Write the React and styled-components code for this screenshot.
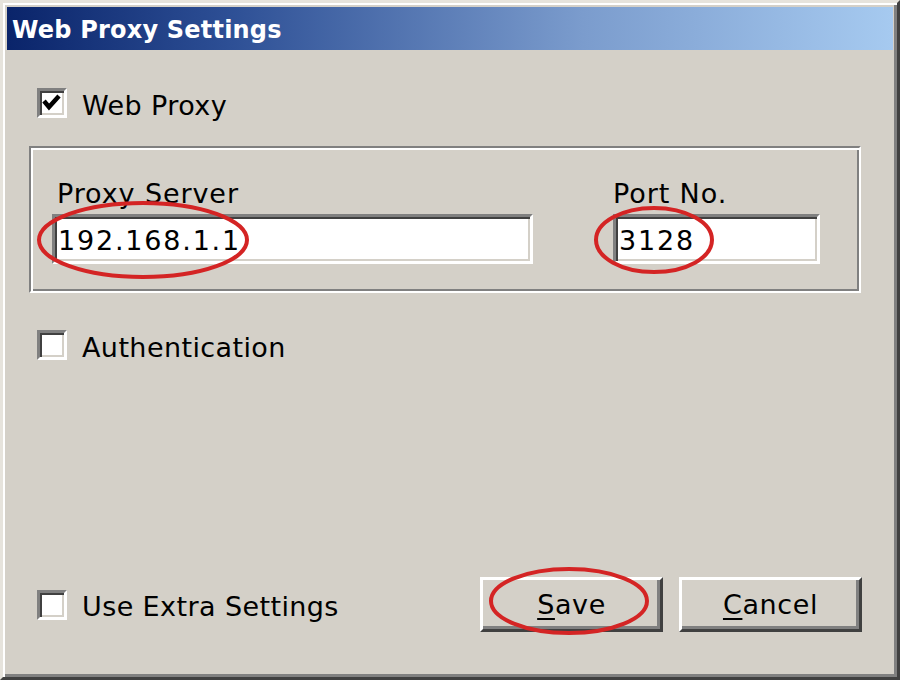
import styled, { createGlobalStyle } from "styled-components";

const GlobalStyle = createGlobalStyle`
	html, body {
		margin: 0;
		padding: 0;
		background: #d4d0c8;
	}
	* {
		box-sizing: border-box;
	}
`;

// 창 전체 틀
const Window = styled.div`
	position: relative;
	width: 900px;
	height: 680px;
	display: flex;
	flex-direction: column;
	padding: 4px;
	background: #d4d0c8;
	border-style: solid;
	border-width: 3px;
	border-color: #e6e3dc #404040 #404040 #e6e3dc;
	box-shadow: inset 2px 2px 0 #ffffff, inset -3px -3px 0 #808080;
	font-family: "DejaVu Sans", Verdana, sans-serif;
	font-size: 27px;
	letter-spacing: 0.4px;
	color: #000;
`;

const TitleBar = styled.div`
	height: 43px;
	display: flex;
	align-items: center;
	padding: 2px 0 0 5px;
	background: linear-gradient(to right, #0a246a 0%, #2d4f95 25%, #7b9ccd 65%, #a6caf0 100%);
	color: #fff;
	font-weight: bold;
	font-size: 24px;
	letter-spacing: 0.2px;
`;

const Content = styled.div`
	flex: 1;
	display: flex;
	flex-direction: column;
	padding: 38px 32px 41px 22px;
`;

const CheckRow = styled.label`
	display: flex;
	align-items: center;
	gap: 15px;
	height: 30px;
	margin-left: 8px;
	margin-top: ${(p) => p.$top || 0}px;
	line-height: 32px;
`;

const RowText = styled.span`
	padding-top: 5px;
`;

const Box = styled.span`
	width: 30px;
	height: 30px;
	flex: none;
	display: flex;
	align-items: center;
	justify-content: center;
	background: #fff;
	border-style: solid;
	border-width: 3px;
	border-color: #808080 #ffffff #ffffff #808080;
	box-shadow: inset 2px 2px 0 #404040, inset -2px -2px 0 #d4d0c8;
`;

// 테두리가 새겨진 그룹 상자
const GroupBox = styled.div`
	margin-top: 28px;
	height: 147px;
	display: grid;
	grid-template-columns: 481px 207px;
	column-gap: 80px;
	padding: 30px 37px 0 21px;
	border-style: solid;
	border-width: 2px;
	border-color: #808080 #ffffff #ffffff #808080;
	box-shadow: inset 2px 2px 0 #ffffff, inset -2px -2px 0 #808080;
`;

const Field = styled.div`
	display: flex;
	flex-direction: column;
	gap: 4px;
`;

const FieldLabel = styled.div`
	line-height: 32px;
	height: 32px;
	margin-left: ${(p) => p.$indent || 0}px;
	letter-spacing: 0.9px;
`;

const TextBox = styled.div`
	height: 50px;
	display: flex;
	align-items: center;
	padding: 3px 0 0 3px;
	background: #fff;
	letter-spacing: 1.8px;
	border-style: solid;
	border-width: 3px;
	border-color: #808080 #ffffff #ffffff #808080;
	box-shadow: inset 2px 2px 0 #404040, inset -2px -2px 0 #d4d0c8;
`;

const BottomRow = styled.div`
	margin-top: auto;
	display: flex;
	align-items: center;
	justify-content: space-between;
`;

const Buttons = styled.div`
	display: flex;
	gap: 16px;
	margin-right: -1px;
`;

const Button = styled.button`
	width: 183px;
	height: 55px;
	padding: 0;
	background: #d4d0c8;
	font-family: inherit;
	font-size: 27px;
	letter-spacing: 0.6px;
	color: #000;
	border-style: solid;
	border-width: 3px;
	border-color: #ffffff #404040 #404040 #ffffff;
	box-shadow: inset -3px -3px 0 #808080;
	cursor: pointer;

	u {
		text-underline-offset: 4px;
		text-decoration-thickness: 2px;
	}
`;

// 빨간 표시 동그라미 (화면 위에 겹침)
const Marks = styled.svg`
	position: absolute;
	left: -3px;
	top: -3px;
	pointer-events: none;
`;

const Check = () => (
	<svg width="20" height="20" viewBox="0 0 20 20">
		<polyline points="2,8 7,14 17,3" fill="none" stroke="#000" strokeWidth="4.5" />
	</svg>
);

export default function App() {
	return (
		<>
			<GlobalStyle />
			<Window>
				<TitleBar>Web Proxy Settings</TitleBar>
				<Content>
					<CheckRow $top={0}>
						<Box>
							<Check />
						</Box>
						<RowText>Web Proxy</RowText>
					</CheckRow>

					<GroupBox>
						<Field>
							<FieldLabel $indent={5}>Proxy Server</FieldLabel>
							<TextBox>192.168.1.1</TextBox>
						</Field>
						<Field>
							<FieldLabel>Port No.</FieldLabel>
							<TextBox>3128</TextBox>
						</Field>
					</GroupBox>

					<CheckRow $top={37}>
						<Box />
						<RowText>Authentication</RowText>
					</CheckRow>

					<BottomRow>
						<CheckRow>
							<Box />
							<RowText>Use Extra Settings</RowText>
						</CheckRow>
						<Buttons>
							<Button>
								<u>S</u>ave
							</Button>
							<Button>
								<u>C</u>ancel
							</Button>
						</Buttons>
					</BottomRow>
				</Content>
				<Marks width="900" height="680">
					<g fill="none" stroke="#d42424" strokeWidth="4">
						<ellipse cx="143" cy="240" rx="104" ry="37" />
						<ellipse cx="654" cy="240" rx="58" ry="32" />
						<ellipse cx="569" cy="601" rx="78" ry="32" />
					</g>
				</Marks>
			</Window>
		</>
	);
}
